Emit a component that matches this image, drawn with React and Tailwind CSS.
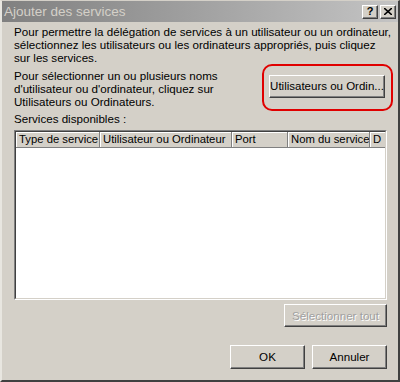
export default function App() {
  const font = { fontFamily: '"Liberation Sans", Arial, sans-serif' };
  const raised =
    "border border-t-white border-l-white border-r-[#404040] border-b-[#404040] shadow-[inset_-1px_-1px_0_#808080]";

  const columns = [
    { label: "Type de service", w: "w-[84px]" },
    { label: "Utilisateur ou Ordinateur", w: "w-[132px]" },
    { label: "Port", w: "w-[56px]" },
    { label: "Nom du service", w: "w-[82px]" },
    { label: "D", w: "w-[20px]" },
  ];

  return (
    <div
      className="w-[400px] h-[382px] bg-[#d4d0c8] flex flex-col border-l-2 border-t border-r-2 border-b-2 border-l-[#e8e6e0] border-t-[#d4d0c8] border-r-[#404040] border-b-[#404040] text-[11.6px] text-black overflow-hidden"
      style={font}
    >
      {/* title bar */}
      <div className="h-[21px] flex items-center justify-between bg-gradient-to-r from-[#808080] to-[#c4c4c4] pl-[2px] pr-[2px]">
        <span className="text-[13.5px] leading-none text-[#d4d0c8]">
          Ajouter des services
        </span>
        <div className="flex gap-[2px]">
          <div className={`w-[16px] h-[14px] bg-[#d4d0c8] flex items-center justify-center text-[11px] font-bold leading-none ${raised}`}>
            ?
          </div>
          <div className={`w-[16px] h-[14px] bg-[#d4d0c8] flex items-center justify-center ${raised}`}>
            <svg width="8" height="7" viewBox="0 0 8 7">
              <path d="M0 0 L8 7 M8 0 L0 7" stroke="black" strokeWidth="1.6" />
            </svg>
          </div>
        </div>
      </div>

      <div className="flex-1 flex flex-col pl-[12px] pr-[11px]">
        <p className="mt-[3px] leading-[13px] whitespace-nowrap">
          Pour permettre la délégation de services à un utilisateur ou un ordinateur,
          <br />
          sélectionnez les utilisateurs ou les ordinateurs appropriés, puis cliquez
          <br />
          sur les services.
        </p>

        <div className="flex justify-between mt-[5px]">
          <p className="leading-[13px] whitespace-nowrap">
            Pour sélectionner un ou plusieurs noms
            <br />
            d&apos;utilisateur ou d&apos;ordinateur, cliquez sur
            <br />
            Utilisateurs ou Ordinateurs.
          </p>
          <div className="w-[131px] h-[47px] border-2 border-[#e00000] rounded-[10px] pl-[5px] pt-[9px] -mr-[6px] -mt-[5px]">
            <button className={`w-[116px] h-[23px] bg-[#d4d0c8] text-[11.5px] leading-none whitespace-nowrap ${raised}`}>
              Utilisateurs ou Ordin...
            </button>
          </div>
        </div>

        <p className="leading-[13px] mt-[1px]">Services disponibles :</p>

        {/* list view */}
        <div className="mt-[5px] h-[170px] bg-white border border-t-[#808080] border-l-[#808080] border-r-white border-b-white">
          <div className="h-full border border-t-[#404040] border-l-[#404040] border-r-[#d4d0c8] border-b-[#d4d0c8] overflow-hidden">
            <div className="flex h-[16px] overflow-hidden text-[11.3px]">
              {columns.map((c) => (
                <div
                  key={c.label}
                  className={`${c.w} shrink-0 bg-[#d4d0c8] pl-[3px] leading-[15px] whitespace-nowrap overflow-hidden border-r border-b border-r-[#808080] border-b-[#808080] shadow-[inset_1px_1px_0_white]`}
                >
                  {c.label}
                </div>
              ))}
            </div>
          </div>
        </div>

        <div className="flex justify-end mt-[4px]">
          <button className={`w-[103px] h-[23px] bg-[#d4d0c8] text-[#a0a0a0] text-[11.6px] leading-none whitespace-nowrap [text-shadow:1px_1px_0_white] ${raised}`}>
            Sélectionner tout
          </button>
        </div>

        <div className="flex justify-end gap-[7px] mt-[18px]">
          <button className={`w-[75px] h-[24px] bg-[#d4d0c8] text-[11.6px] leading-none ${raised}`}>
            OK
          </button>
          <button className={`w-[75px] h-[24px] bg-[#d4d0c8] text-[11.6px] leading-none ${raised}`}>
            Annuler
          </button>
        </div>
      </div>
    </div>
  );
}
